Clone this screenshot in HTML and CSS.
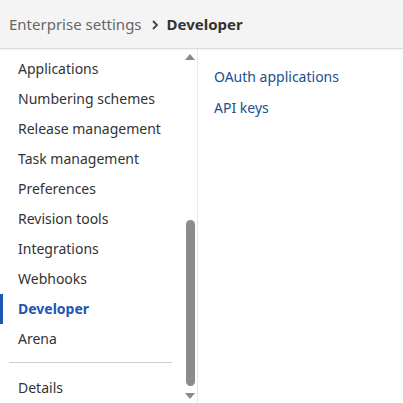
FILE: index.html
```html
<!DOCTYPE html>
<html>
<head>
<meta charset="utf-8">
<link rel="stylesheet" href="styles.css">
</head>
<body>
<div class="page">
  <header class="header">
    <span class="crumb">Enterprise settings</span>
    <svg class="chev" width="10" height="12" viewBox="0 0 10 12"><path d="M3 2 L7 6 L3 10" fill="none" stroke="#444" stroke-width="1.8"/></svg>
    <span class="current">Developer</span>
  </header>
  <div class="body">
    <aside class="side">
      <div class="side-scroll">
        <ul class="nav">
          <li class="item">Applications</li>
          <li class="item">Numbering schemes</li>
          <li class="item">Release management</li>
          <li class="item">Task management</li>
          <li class="item">Preferences</li>
          <li class="item">Revision tools</li>
          <li class="item">Integrations</li>
          <li class="item">Webhooks</li>
          <li class="item active">Developer</li>
          <li class="item">Arena</li>
        </ul>
        <div class="divider"></div>
        <ul class="nav">
          <li class="item">Details</li>
        </ul>
      </div>
      <div class="scrollbar">
        <div class="arrow up"></div>
        <div class="track"><div class="thumb"></div></div>
        <div class="arrow down"></div>
      </div>
    </aside>
    <main class="main">
      <a class="link">OAuth applications</a>
      <a class="link">API keys</a>
    </main>
  </div>
</div>
</body>
</html>
```
FILE: styles.css
```css
* { box-sizing: border-box; }
html, body { margin: 0; padding: 0; background: #fff; }
body { font-family: "Noto Sans", "Open Sans", sans-serif; color: #333; }
.page { width: 403px; height: 403px; display: flex; flex-direction: column; overflow: hidden; }
.header {
  height: 49px; flex: none;
  background: #f4f4f4;
  border-bottom: 1px solid #dcdcdc;
  box-shadow: 0 1px 2px rgba(0,0,0,0.06);
  display: flex; align-items: center;
  padding: 0 0 0 9px;
  font-size: 15px;
}
.crumb { color: #666; }
.chev { margin: 1px 7px 0 8px; }
.current { color: #333; font-weight: 700; }
.body { flex: 1; display: flex; min-height: 0; }
.side { width: 198px; flex: none; display: flex; border-right: 1px solid #e6e9ee; position: relative; }
.side-scroll { flex: 1; padding-top: 5px; }
.nav { list-style: none; margin: 0; padding: 0; }
.item { height: 30px; line-height: 30px; padding-left: 18px; font-size: 14px; color: #333; position: relative; }
.item.active { color: #1e56b5; font-weight: 700; }
.item.active::before { content: ""; position: absolute; left: 0; top: 0; width: 3px; height: 30px; background: #1e56b5; }
.divider { height: 1px; background: #cfcfcf; margin: 8px 12px 10px 9px; }
.scrollbar { width: 12px; flex: none; display: flex; flex-direction: column; align-items: center; margin-right: 1px; padding: 5px 0 4px; }
.arrow { width: 0; height: 0; border-left: 5px solid transparent; border-right: 5px solid transparent; flex: none; }
.arrow.up { border-bottom: 6px solid #8a8a8a; }
.arrow.down { border-top: 6px solid #8a8a8a; }
.track { flex: 1; width: 9px; display: flex; flex-direction: column; justify-content: flex-end; padding: 4px 0 7px; }
.thumb { height: 166px; background: #8c8c8c; border-radius: 5px; }
.main { flex: 1; padding: 16px 0 0 16px; display: flex; flex-direction: column; }
.link { font-size: 14px; color: #20508c; height: 31px; line-height: 24px; }
```
